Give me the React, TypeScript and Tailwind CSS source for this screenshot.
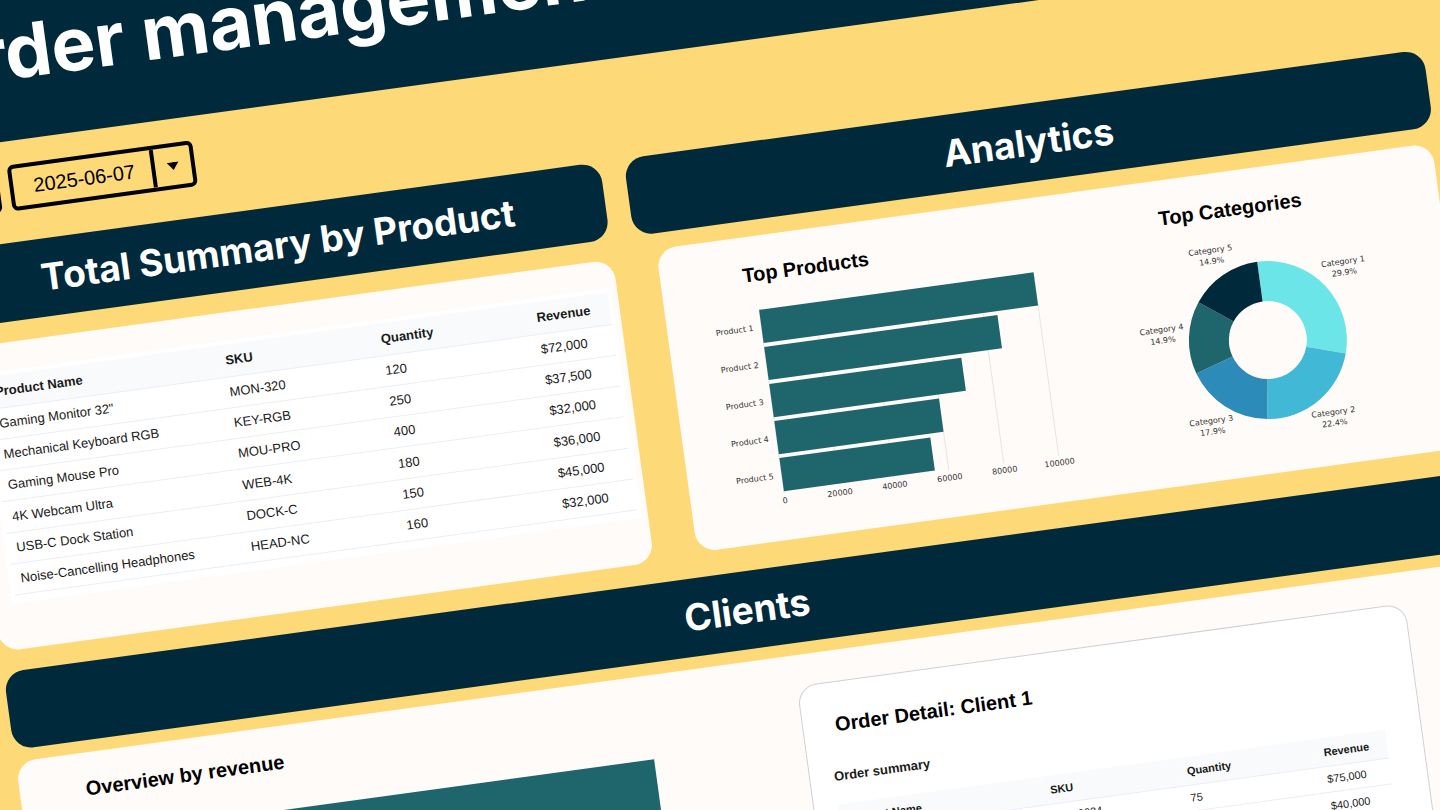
import type { ReactNode } from "react";

type Row = { name: string; sku: string; quantity: number; revenue: string };

const summaryRows: Row[] = [
  { name: 'Gaming Monitor 32"', sku: "MON-320", quantity: 120, revenue: "$72,000" },
  { name: "Mechanical Keyboard RGB", sku: "KEY-RGB", quantity: 250, revenue: "$37,500" },
  { name: "Gaming Mouse Pro", sku: "MOU-PRO", quantity: 400, revenue: "$32,000" },
  { name: "4K Webcam Ultra", sku: "WEB-4K", quantity: 180, revenue: "$36,000" },
  { name: "USB-C Dock Station", sku: "DOCK-C", quantity: 150, revenue: "$45,000" },
  { name: "Noise-Cancelling Headphones", sku: "HEAD-NC", quantity: 160, revenue: "$32,000" },
];

const orderRows: Row[] = [
  { name: "Laptop Pro", sku: "LAP-2024", quantity: 75, revenue: "$75,000" },
  { name: "Smartphone", sku: "PHN-2024", quantity: 50, revenue: "$40,000" },
];

const products = [
  { label: "Product 1", value: 100000 },
  { label: "Product 2", value: 85000 },
  { label: "Product 3", value: 70000 },
  { label: "Product 4", value: 60000 },
  { label: "Product 5", value: 55000 },
];

const ticks = [0, 20000, 40000, 60000, 80000, 100000];

const categories = [
  { label: "Category 1", share: 29.9, color: "#6ce5e8", x: 225, y: 54 },
  { label: "Category 2", share: 22.4, color: "#41b8d5", x: 195, y: 202 },
  { label: "Category 3", share: 17.9, color: "#2d8bba", x: 73, y: 194 },
  { label: "Category 4", share: 14.9, color: "#1f656c", x: 36, y: 97 },
  { label: "Category 5", share: 14.9, color: "#00293b", x: 95, y: 25 },
];

const SectionTitle = ({ children }: { children: ReactNode }) => (
  <h2 className="flex h-[78px] items-center justify-center rounded-[20px] bg-[#00293b] font-['Inter',sans-serif] text-[37px] font-bold text-white">
    {children}
  </h2>
);

const ChartTitle = ({ children }: { children: ReactNode }) => (
  <h3 className="text-xl leading-7 font-bold text-black">{children}</h3>
);

const ProductTable = ({
  rows,
  className,
  headClassName,
}: {
  rows: Row[];
  className: string;
  headClassName: string;
}) => (
  <table className={`w-full table-fixed border-collapse text-left text-[#1a1a1a] ${className}`}>
    <thead className="bg-[#f8fafc]">
      <tr className={headClassName}>
        <th className="w-[37%] pl-2">Product Name</th>
        <th className="w-1/4 pl-2">SKU</th>
        <th className="w-1/4 pl-2">Quantity</th>
        <th className="pl-2">Revenue</th>
      </tr>
    </thead>
    <tbody>
      {rows.map((row) => (
        <tr key={row.sku} className="border-y border-[#e9eef5]">
          <td className="pl-2 whitespace-nowrap">{row.name}</td>
          <td className="pl-2">{row.sku}</td>
          <td className="pl-2">{row.quantity}</td>
          <td className="pl-2">{row.revenue}</td>
        </tr>
      ))}
    </tbody>
  </table>
);

const BarChart = () => {
  const left = 54;
  const scale = 277 / 100000;
  return (
    <svg width="350" height="230" className="font-['DejaVu_Sans',sans-serif] text-[8px]" fill="#333">
      {ticks.map((tick) => (
        <g key={tick}>
          <line
            x1={left + tick * scale}
            x2={left + tick * scale}
            y1={23}
            y2={207}
            stroke="#e8e4e2"
          />
          <text x={left + tick * scale} y={217} textAnchor="middle">
            {tick}
          </text>
        </g>
      ))}
      {products.map((product, i) => (
        <g key={product.label}>
          <text x={46} y={42 + i * 37.4} textAnchor="end">
            {product.label}
          </text>
          <rect
            x={left}
            y={22 + i * 37.4}
            width={product.value * scale}
            height={33.5}
            fill="#1f656c"
          />
        </g>
      ))}
    </svg>
  );
};

const DonutChart = () => {
  const cx = 140;
  const cy = 121;
  const point = (share: number, r: number) => {
    const a = (share / 100) * 2 * Math.PI;
    return `${cx + r * Math.sin(a)} ${cy - r * Math.cos(a)}`;
  };
  let start = 0;
  return (
    <svg width="270" height="230" className="font-['DejaVu_Sans',sans-serif] text-[8px]" fill="#333">
      {categories.map((category) => {
        const from = start;
        const to = start + category.share;
        start = to;
        return (
          <g key={category.label}>
            <path
              fill={category.color}
              d={`M${point(from, 79)} A79 79 0 0 1 ${point(to, 79)} L${point(to, 39)} A39 39 0 0 0 ${point(from, 39)}Z`}
            />
            <text x={category.x} y={category.y + 2} textAnchor="middle">
              {category.label}
            </text>
            <text x={category.x} y={category.y + 13} textAnchor="middle">
              {category.share}%
            </text>
          </g>
        );
      })}
    </svg>
  );
};

const App = () => {
  return (
    <div className="h-screen overflow-hidden bg-[#fdd978] font-['Liberation_Sans',Arial,sans-serif]">
      {/* Tilted page, wider than the window so its corners stay covered */}
      <div className="-ml-[112px] w-[calc(100%+99px)] origin-[112px_0px] rotate-[-7.8deg]">
        <header className="flex h-[141px] items-end bg-[#00293b] px-6 pb-12">
          <h1 className="font-['Inter',sans-serif] text-[74px] leading-[80px] font-bold whitespace-nowrap text-white">
            Order management
          </h1>
        </header>

        <main className="px-6">
          {/* Date filter */}
          <div className="mt-6 flex h-[46px] gap-[10px]">
            <button
              type="button"
              aria-label="Previous date"
              className="w-[62px] rounded-md border-4 border-black"
            />
            <div className="flex w-[187px] overflow-hidden rounded-md border-4 border-black">
              <input
                type="text"
                aria-label="Date"
                defaultValue="2025-06-07"
                className="w-[139px] pl-5 text-xl text-black outline-none"
              />
              <button
                type="button"
                aria-label="Open calendar"
                className="flex flex-1 items-center justify-center border-l-4 border-black"
              >
                <svg width="12" height="8" viewBox="0 0 12 8">
                  <path d="M0 0h12L6 8z" />
                </svg>
              </button>
            </div>
          </div>

          <div className="mt-[31px] grid grid-cols-[9fr_11fr] gap-6">
            {/* Summary */}
            <section>
              <SectionTitle>Total Summary by Product</SectionTitle>
              <div className="mt-5 h-[306px] rounded-[20px] bg-[#fffbf9] pt-7 pr-[6px] pl-[18px]">
                <div className="bg-white px-1 pt-1 pb-2">
                  <ProductTable
                    rows={summaryRows}
                    className="h-[220px] text-[13px]"
                    headClassName="h-8"
                  />
                </div>
              </div>
            </section>

            {/* Analytics */}
            <section>
              <SectionTitle>Analytics</SectionTitle>
              <div className="mt-4 mr-1 ml-5 flex h-[306px] gap-16 rounded-[20px] bg-[#fffbf9] pt-6 pl-10">
                <div>
                  <div className="pl-[42px]">
                    <ChartTitle>Top Products</ChartTitle>
                  </div>
                  <BarChart />
                </div>
                <div>
                  <div className="pl-12">
                    <ChartTitle>Top Categories</ChartTitle>
                  </div>
                  <DonutChart />
                </div>
              </div>
            </section>
          </div>

          {/* Clients */}
          <section className="mt-[21px]">
            <SectionTitle>Clients</SectionTitle>
            <div className="mt-3 flex rounded-[20px] bg-[#fffbf9] pr-[93px] pb-8">
              <div className="flex-1 pt-[22px] pl-[66px]">
                <ChartTitle>Overview by revenue</ChartTitle>
                <div className="mt-[34px] mr-[151px] ml-8 h-[110px] bg-[#1f656c]" />
              </div>
              <div className="mt-[31px] w-[614px] rounded-[20px] border border-[#d0d0d4] bg-white pt-7 pr-9 pb-8 pl-6">
                <div className="pl-2">
                  <ChartTitle>Order Detail: Client 1</ChartTitle>
                </div>
                <h4 className="mt-7 text-[13px] leading-5 font-bold text-[#1a1a1a]">
                  Order summary
                </h4>
                <div className="pt-[18px]">
                  <ProductTable
                    rows={orderRows}
                    className="h-[82px] text-[11px]"
                    headClassName="h-7"
                  />
                </div>
              </div>
            </div>
          </section>
        </main>
      </div>
    </div>
  );
};

export default App;
